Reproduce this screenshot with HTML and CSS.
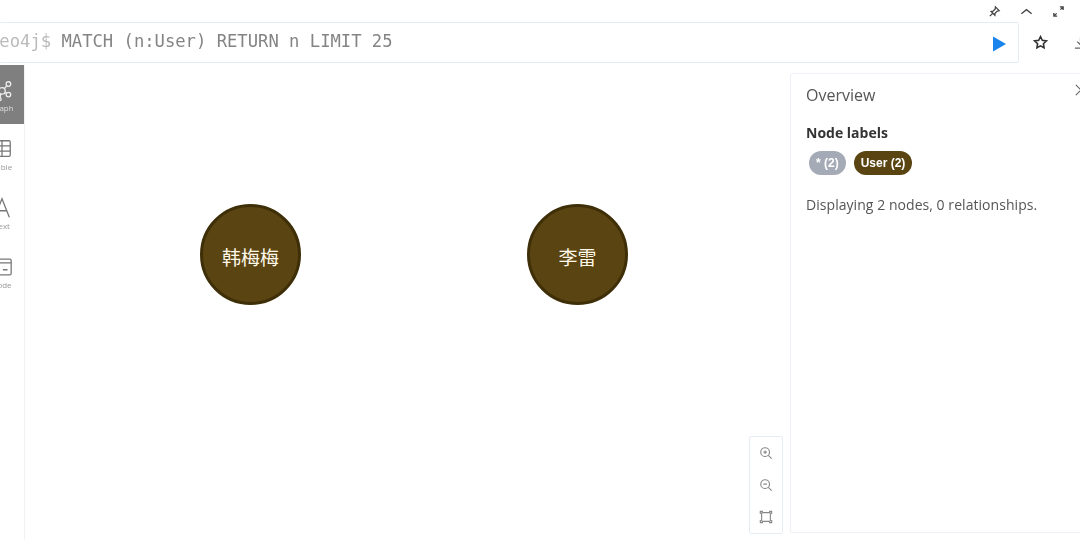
FILE: index.html
```html
<!DOCTYPE html>
<html lang="en">

<head>
    <meta charset="UTF-8">
    <title>Neo4j Browser</title>
    <link rel="stylesheet" href="styles.css">
</head>

<body>
    <div class="frame">
        <div class="window-bar">
            <svg class="win-icon" viewBox="0 0 14 14"><path d="M8 2l4 4-2 .6-2.400 2.400-.2 2-4-4 2-.3L7.800 4.300zM5 9l-3 3"/></svg>
            <svg class="win-icon" viewBox="0 0 14 14"><path d="M1.500 9.500L7 5l5.500 4.500"/></svg>
            <svg class="win-icon" viewBox="0 0 14 14"><path d="M8.500 2h3.500v3.500M12 2L9 5M5.500 12H2V8.500M2 12l3-3"/></svg>
        </div>

        <div class="editor-row">
            <div class="editor">
                <code class="query"><span class="prompt">neo4j$</span> MATCH (n:User) RETURN n LIMIT 25</code>
                <svg class="play" viewBox="0 0 14 16"><path d="M0 0l14 8-14 8z"/></svg>
            </div>
            <svg class="row-icon" viewBox="0 0 16 16"><path d="M8 1.800l1.900 3.900 4.300.6-3.100 3 .7 4.300L8 11.600l-3.800 2 .7-4.300-3.100-3 4.300-.6z"/></svg>
            <svg class="row-icon" viewBox="0 0 16 16"><path d="M8 2v8M4.500 7L8 10.500 11.500 7M2 14h12"/></svg>
        </div>

        <div class="main">
            <div class="sidebar">
                <div class="side-item active">
                    <svg viewBox="0 0 24 24"><circle cx="12" cy="13" r="3.500"/><circle cx="19" cy="5.500" r="2.500"/><circle cx="19" cy="17" r="2.500"/><circle cx="9" cy="22" r="2"/><circle cx="3" cy="8" r="2.500"/><path d="M14.500 10.500l3-3.300M15.300 14.500l1.500 1M10.800 16.300l-1 3.700M9.200 11l-4.200-2"/></svg>
                    <span>Graph</span>
                </div>
                <div class="side-item">
                    <svg viewBox="0 0 24 24"><rect x="4" y="3" width="17" height="17" rx="1.500"/><path d="M4 8.700h17M4 14.300h17M12 3v17"/></svg>
                    <span>Table</span>
                </div>
                <div class="side-item">
                    <svg viewBox="0 0 24 24"><path d="M4 22L12 2l8 20M7 15h10"/></svg>
                    <span>Text</span>
                </div>
                <div class="side-item">
                    <svg viewBox="0 0 24 24"><rect x="3" y="3.500" width="19" height="17" rx="1.500"/><path d="M3 7.500h19M13 15h5"/></svg>
                    <span>Code</span>
                </div>
            </div>

            <div class="canvas">
                <div class="node node-han">韩梅梅</div>
                <div class="node node-li">李雷</div>
                <div class="zoom-box">
                    <button class="zoom-btn"><svg viewBox="0 0 16 16"><circle cx="7" cy="7" r="5"/><path d="M10.700 10.700L14.500 14.500M5 7h4M7 5v4"/></svg></button>
                    <button class="zoom-btn"><svg viewBox="0 0 16 16"><circle cx="7" cy="7" r="5"/><path d="M10.700 10.700L14.500 14.500M5 7h4"/></svg></button>
                    <button class="zoom-btn"><svg viewBox="0 0 16 16"><rect x="3" y="3" width="10" height="10" rx="1"/><path d="M1.500 4.500v-3h3M11.500 1.500h3v3M14.500 11.500v3h-3M4.500 14.500h-3v-3"/></svg></button>
                </div>
            </div>

            <div class="panel">
                <div class="panel-head">
                    <h3>Overview</h3>
                    <svg class="panel-close" viewBox="0 0 14 14"><path d="M1 1l12 12M13 1L1 13"/></svg>
                </div>
                <h4>Node labels</h4>
                <div class="pills">
                    <span class="pill pill-all">* (2)</span>
                    <span class="pill pill-user">User (2)</span>
                </div>
                <p class="summary">Displaying 2 nodes, 0 relationships.</p>
            </div>
        </div>
    </div>
</body>

</html>
```

FILE: styles.css
```css
html, body {
    margin: 0;
    height: 100%;
    overflow: hidden;
    background: #fff;
}

.frame {
    width: 1080px;
    height: 540px;
    overflow: hidden;
    filter: blur(0.6px);
}

.window-bar {
    display: flex;
    justify-content: flex-end;
    align-items: center;
    gap: 19px;
    height: 22px;
    padding-right: 15px;
    box-sizing: border-box;
}
.win-icon {
    width: 13px;
    height: 13px;
    fill: none;
    stroke: #444;
    stroke-width: 1.4;
}

.editor-row {
    display: flex;
    align-items: center;
    width: 1090px;
    height: 41px;
}
.editor {
    display: flex;
    align-items: center;
    justify-content: space-between;
    width: 1020px;
    height: 41px;
    margin-left: -1px;
    padding-right: 12px;
    box-sizing: border-box;
    border: 1px solid #e4ebf4;
    border-radius: 2px;
}
.query {
    margin: 0 0 3px -11px;
    font-family: "DejaVu Sans Mono", monospace;
    font-size: 17.2px;
    color: #848484;
    white-space: pre;
}
.prompt {
    color: #bbb;
}
.play {
    width: 13px;
    height: 16px;
    margin-top: 2px;
    fill: #1a84ec;
}
.row-icon {
    flex: none;
    width: 15px;
    height: 15px;
    margin-left: 14px;
    fill: none;
    stroke: #333;
    stroke-width: 1.7;
}
.row-icon:last-child {
    margin-left: 25px;
    stroke: #666;
    stroke-width: 1.3;
}

.main {
    display: grid;
    grid-template-columns: 24px 766px 300px;
    width: 1090px;
    height: 477px;
}

.sidebar {
    width: 24px;
    margin-top: 2px;
    overflow: hidden;
    border-right: 1px solid #f0f2f6;
}
.side-item {
    display: flex;
    flex-direction: column;
    align-items: center;
    width: 44px;
    height: 59px;
    margin-left: -20px;
    padding-top: 14px;
    box-sizing: border-box;
    font-family: "Open Sans", sans-serif;
    font-size: 8px;
    color: #999;
}
.side-item svg {
    flex: none;
    width: 22px;
    height: 22px;
    margin-bottom: 1px;
    fill: none;
    stroke: #777;
    stroke-width: 1.4;
}
.side-item.active {
    background: #7f7f7f;
    color: #ddd;
}
.side-item.active svg {
    stroke: #eee;
}

.canvas {
    position: relative;
}
.node {
    position: absolute;
    top: 141px;
    display: flex;
    align-items: center;
    justify-content: center;
    width: 101px;
    height: 101px;
    padding-top: 3px;
    box-sizing: border-box;
    border: 3px solid #3f2f08;
    border-radius: 50%;
    background: #5a4412;
    font-family: "Noto Sans CJK SC", sans-serif;
    font-size: 19px;
    color: #fff8e8;
}
.node-han {
    left: 176px;
}
.node-li {
    left: 503px;
}

.zoom-box {
    position: absolute;
    right: 7px;
    bottom: 6px;
    display: flex;
    flex-direction: column;
    width: 34px;
    box-sizing: border-box;
    border: 1px solid #e6ecf4;
    border-radius: 2px;
    background: #fff;
}
.zoom-btn {
    display: flex;
    align-items: center;
    justify-content: center;
    height: 32px;
    padding: 0;
    border: none;
    background: none;
}
.zoom-btn svg {
    width: 14px;
    height: 14px;
    fill: none;
    stroke: #888;
    stroke-width: 1.3;
}

.panel {
    margin: 10px 0 7px;
    padding: 0 15px;
    box-sizing: border-box;
    border: 1px solid #eef1f6;
    border-radius: 2px;
    font-family: "Open Sans", sans-serif;
    color: #4d4d4d;
}
.panel-head {
    display: flex;
    justify-content: space-between;
    align-items: center;
    height: 42px;
}
.panel-head h3 {
    margin: 0;
    font-size: 16px;
    font-weight: 400;
    color: #555;
}
.panel-close {
    align-self: flex-start;
    width: 12px;
    height: 14px;
    margin: 9px -13px 0 0;
    fill: none;
    stroke: #666;
    stroke-width: 1.3;
}
.panel h4 {
    margin: 7px 0 0;
    font-size: 14px;
    font-weight: 700;
    line-height: 20px;
    color: #333;
}
.pills {
    display: flex;
    gap: 8px;
    margin: 8px 0 0 3px;
}
.pill {
    height: 24px;
    padding: 0 7px;
    border-radius: 12px;
    font-family: "Liberation Sans", sans-serif;
    font-size: 12px;
    font-weight: 700;
    line-height: 24px;
    color: #fff;
}
.pill-all {
    background: #a5abb6;
}
.pill-user {
    background: #5a4412;
}
.summary {
    margin: 20px 0 0;
    font-size: 14px;
    line-height: 20px;
    letter-spacing: 0.05px;
    color: #555;
}
```
